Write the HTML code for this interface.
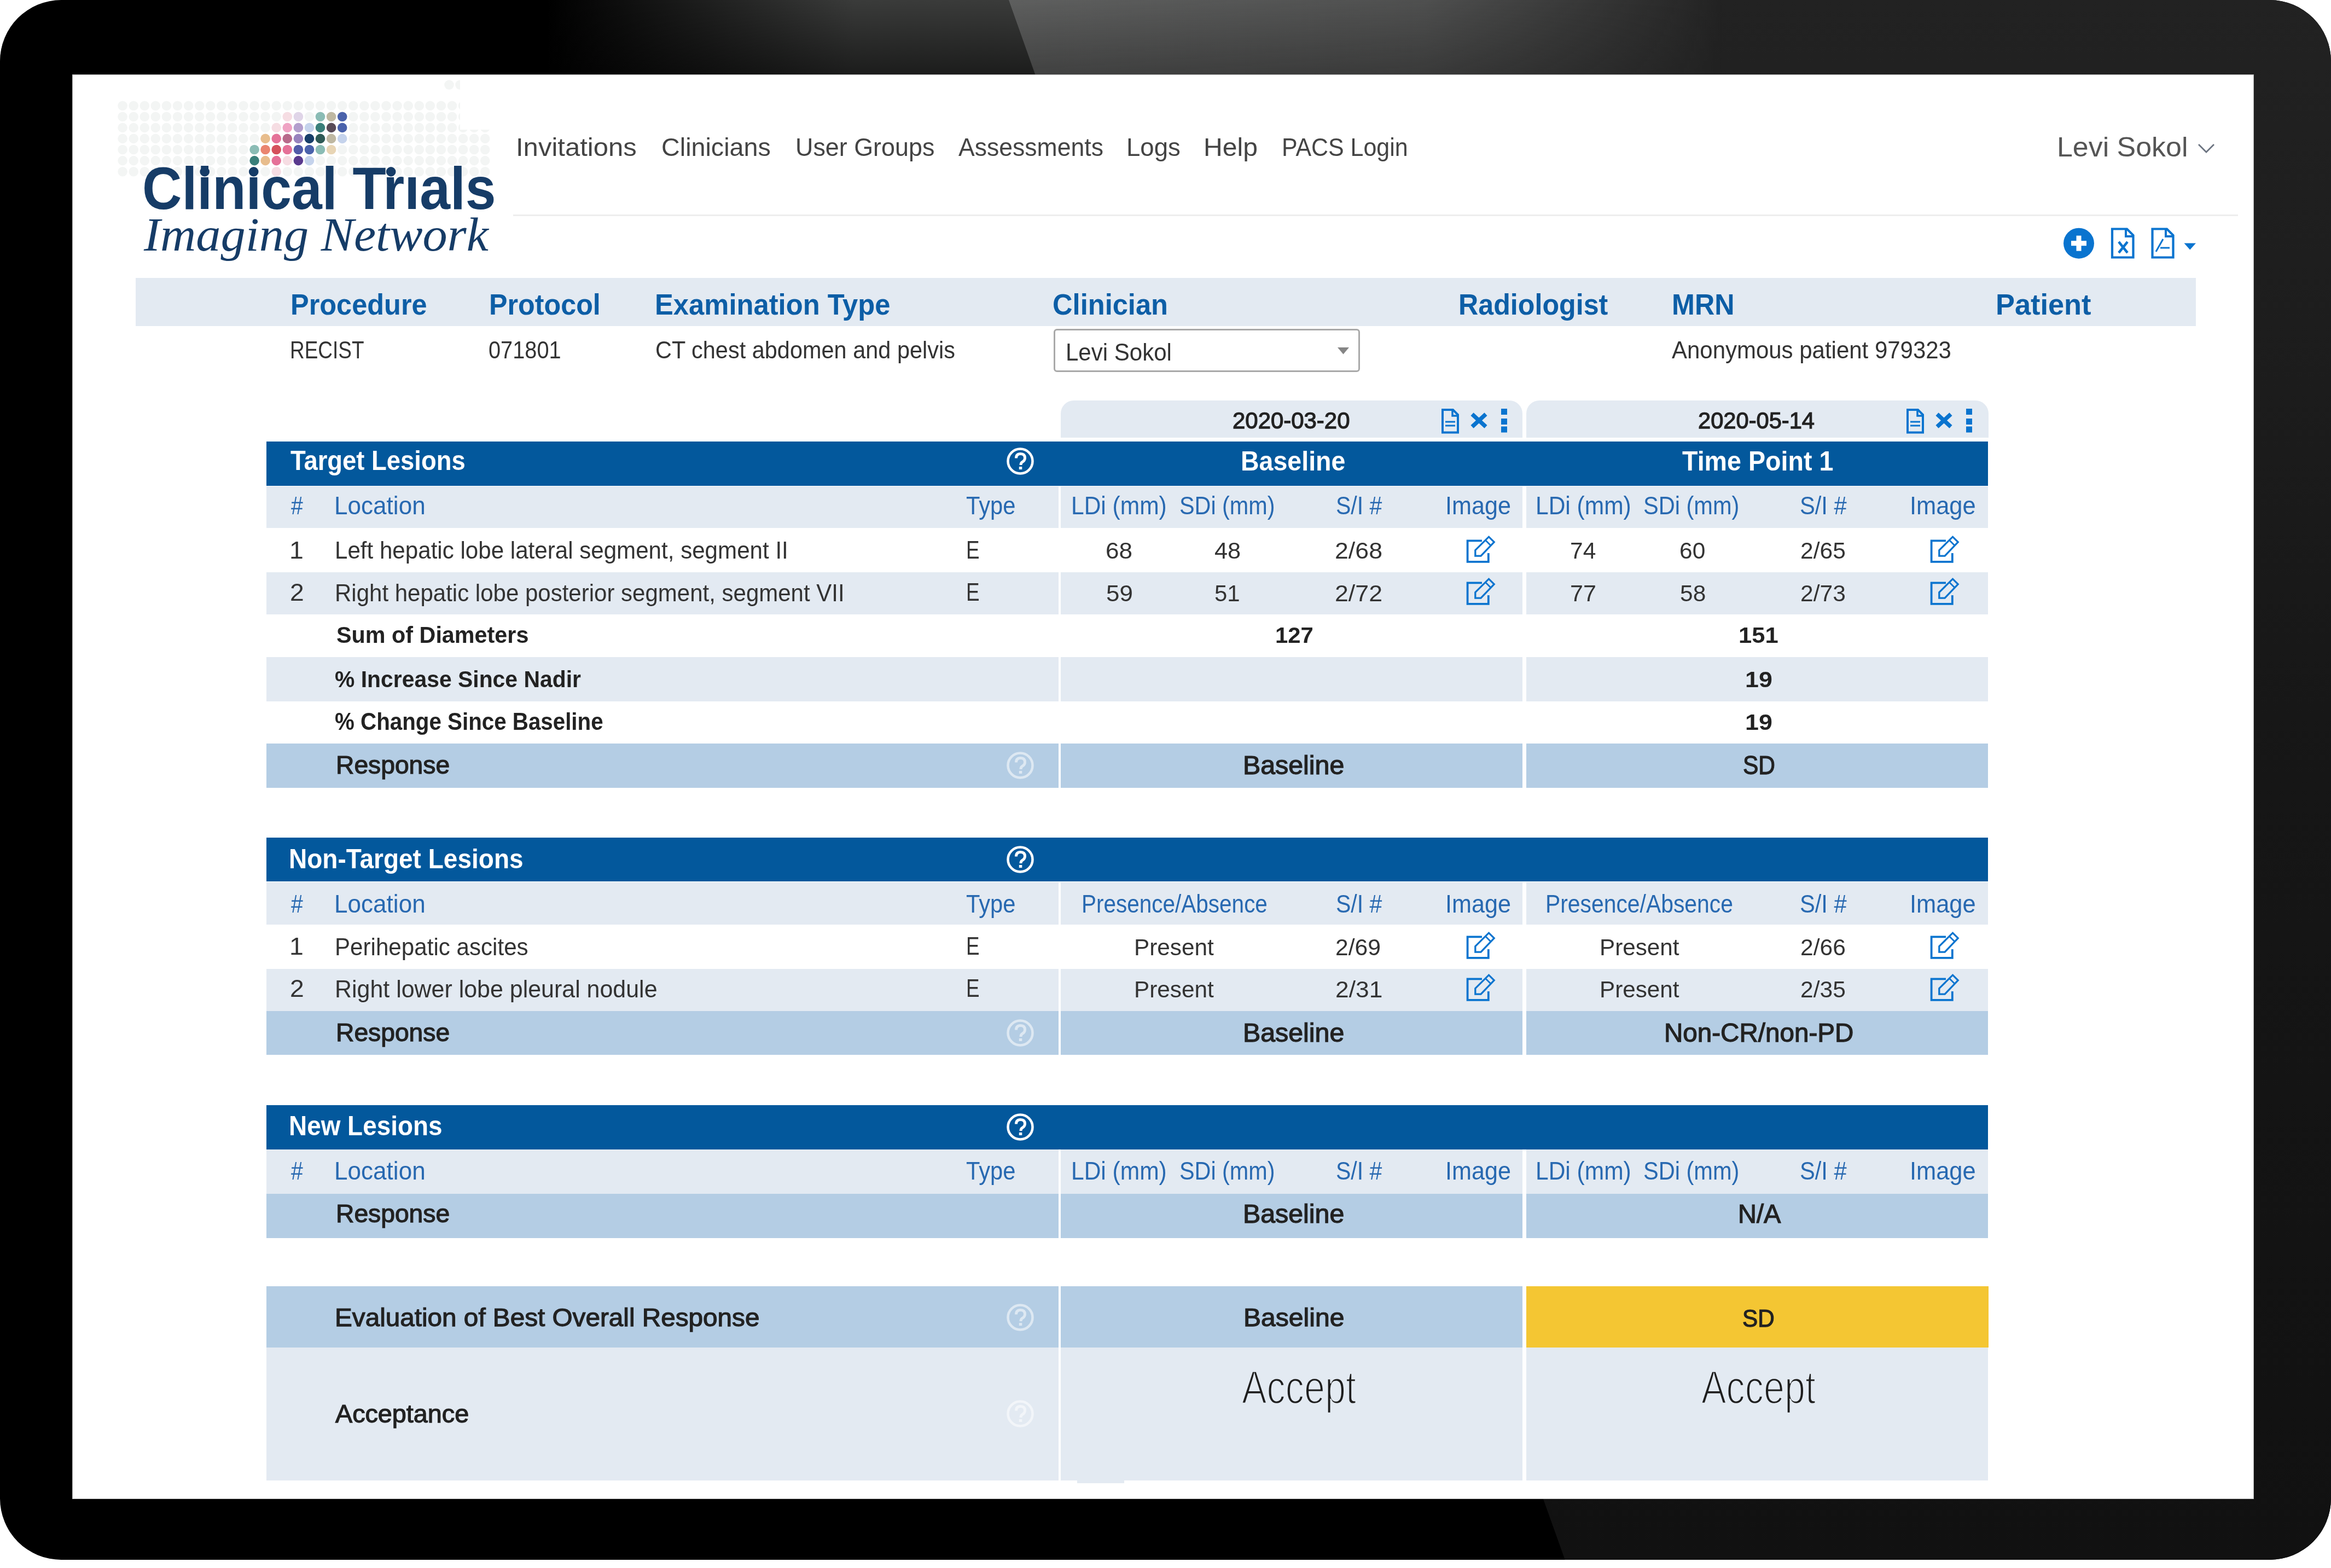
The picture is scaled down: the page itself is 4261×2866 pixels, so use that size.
<!DOCTYPE html>
<html><head><meta charset="utf-8"><title>Clinical Trials Imaging Network</title>
<style>
html,body{margin:0;padding:0;}
body{width:4261px;height:2866px;position:relative;overflow:hidden;background:#fff;font-family:'Liberation Sans', sans-serif;}
.t{position:absolute;white-space:nowrap;transform-origin:0 0;}
</style></head><body>
<svg style="position:absolute;left:0;top:0" width="4261" height="2866" viewBox="0 0 4261 2866">
<defs>
<clipPath id="fr"><path fill-rule="evenodd" d="M112 0 H4149 A112 112 0 0 1 4261 112 V2739 A112 112 0 0 1 4149 2851 H112 A112 112 0 0 1 0 2739 V112 A112 112 0 0 1 112 0 Z M132 136 V2740 H4120 V136 Z"/></clipPath>
<linearGradient id="glh" gradientUnits="userSpaceOnUse" x1="1000" y1="0" x2="1560" y2="0"><stop offset="0" stop-color="#3a3b3a" stop-opacity="0"/><stop offset="1" stop-color="#3a3b3a" stop-opacity="1"/></linearGradient>
<linearGradient id="gvl" gradientUnits="userSpaceOnUse" x1="0" y1="0" x2="0" y2="136"><stop offset="0" stop-color="#000" stop-opacity="0"/><stop offset="1" stop-color="#000" stop-opacity="0.52"/></linearGradient>
<linearGradient id="gvm" gradientUnits="userSpaceOnUse" x1="0" y1="0" x2="0" y2="136"><stop offset="0" stop-color="#fff"/><stop offset="1" stop-color="#8a8a8a"/></linearGradient>
<mask id="mr" maskUnits="userSpaceOnUse" x="0" y="0" width="4261" height="140"><rect x="0" y="0" width="4261" height="136" fill="url(#gvm)"/></mask>
<linearGradient id="gbase" gradientUnits="userSpaceOnUse" x1="0" y1="0" x2="0" y2="2851"><stop offset="0" stop-color="#222222"/><stop offset="0.5" stop-color="#161616"/><stop offset="1" stop-color="#111111"/></linearGradient>
<linearGradient id="gr" gradientUnits="userSpaceOnUse" x1="1850" y1="0" x2="3150" y2="0"><stop offset="0" stop-color="#a0a2a1" stop-opacity="0.48"/><stop offset="0.577" stop-color="#a0a2a1" stop-opacity="0.36"/><stop offset="0.96" stop-color="#a0a2a1" stop-opacity="0.04"/><stop offset="1" stop-color="#a0a2a1" stop-opacity="0"/></linearGradient>
</defs>
<g clip-path="url(#fr)">
<rect x="0" y="0" width="4261" height="2851" fill="#000"/>
<polygon points="0,0 1843.7,0 1892.2,136 0,136" fill="url(#glh)"/>
<polygon points="0,0 1843.7,0 1892.2,136 0,136" fill="url(#gvl)"/>
<polygon points="1843.7,0 4261,0 4261,2851 2860.7,2851" fill="url(#gbase)"/>
<polygon points="1843.7,0 4261,0 4261,136 1892.2,136" fill="url(#gr)" mask="url(#mr)"/>
</g>
</svg>
<div style="position:absolute;left:132px;top:136px;width:3988px;height:2604px;background:#ffffff;box-shadow:inset 0 0 0 1px rgba(0,0,0,0.28)"></div><svg style="position:absolute;left:0;top:0" width="1000" height="500" viewBox="0 0 1000 500"><circle cx="224.1" cy="193.2" r="8.8" fill="#f3f5f4"/><circle cx="244.2" cy="193.2" r="8.8" fill="#f3f5f4"/><circle cx="264.3" cy="193.2" r="8.8" fill="#f3f5f4"/><circle cx="284.3" cy="193.2" r="8.8" fill="#f3f5f4"/><circle cx="304.4" cy="193.2" r="8.8" fill="#f3f5f4"/><circle cx="324.5" cy="193.2" r="8.8" fill="#f3f5f4"/><circle cx="344.6" cy="193.2" r="8.8" fill="#f3f5f4"/><circle cx="364.7" cy="193.2" r="8.8" fill="#f3f5f4"/><circle cx="384.7" cy="193.2" r="8.8" fill="#f3f5f4"/><circle cx="404.8" cy="193.2" r="8.8" fill="#f3f5f4"/><circle cx="424.9" cy="193.2" r="8.8" fill="#f3f5f4"/><circle cx="445.0" cy="193.2" r="8.8" fill="#f3f5f4"/><circle cx="465.1" cy="193.2" r="8.8" fill="#f3f5f4"/><circle cx="485.1" cy="193.2" r="8.8" fill="#f3f5f4"/><circle cx="505.2" cy="193.2" r="8.8" fill="#f3f5f4"/><circle cx="525.3" cy="193.2" r="8.8" fill="#f3f5f4"/><circle cx="545.4" cy="193.2" r="8.8" fill="#f3f5f4"/><circle cx="565.5" cy="193.2" r="8.8" fill="#f3f5f4"/><circle cx="585.5" cy="193.2" r="8.8" fill="#f3f5f4"/><circle cx="605.6" cy="193.2" r="8.8" fill="#f3f5f4"/><circle cx="625.7" cy="193.2" r="8.8" fill="#f3f5f4"/><circle cx="645.8" cy="193.2" r="8.8" fill="#f3f5f4"/><circle cx="665.9" cy="193.2" r="8.8" fill="#f3f5f4"/><circle cx="685.9" cy="193.2" r="8.8" fill="#f3f5f4"/><circle cx="706.0" cy="193.2" r="8.8" fill="#f3f5f4"/><circle cx="726.1" cy="193.2" r="8.8" fill="#f3f5f4"/><circle cx="746.2" cy="193.2" r="8.8" fill="#f3f5f4"/><circle cx="766.3" cy="193.2" r="8.8" fill="#f3f5f4"/><circle cx="786.3" cy="193.2" r="8.8" fill="#f3f5f4"/><circle cx="806.4" cy="193.2" r="8.8" fill="#f3f5f4"/><circle cx="826.5" cy="193.2" r="8.8" fill="#f3f5f4"/><circle cx="846.6" cy="193.2" r="8.8" fill="#f3f5f4"/><circle cx="866.7" cy="193.2" r="8.8" fill="#f3f5f4"/><circle cx="886.7" cy="193.2" r="8.8" fill="#f3f5f4"/><circle cx="224.1" cy="213.3" r="8.8" fill="#f3f5f4"/><circle cx="244.2" cy="213.3" r="8.8" fill="#f3f5f4"/><circle cx="264.3" cy="213.3" r="8.8" fill="#f3f5f4"/><circle cx="284.3" cy="213.3" r="8.8" fill="#f3f5f4"/><circle cx="304.4" cy="213.3" r="8.8" fill="#f3f5f4"/><circle cx="324.5" cy="213.3" r="8.8" fill="#f3f5f4"/><circle cx="344.6" cy="213.3" r="8.8" fill="#f3f5f4"/><circle cx="364.7" cy="213.3" r="8.8" fill="#f3f5f4"/><circle cx="384.7" cy="213.3" r="8.8" fill="#f3f5f4"/><circle cx="404.8" cy="213.3" r="8.8" fill="#f3f5f4"/><circle cx="424.9" cy="213.3" r="8.8" fill="#f3f5f4"/><circle cx="445.0" cy="213.3" r="8.8" fill="#f3f5f4"/><circle cx="465.1" cy="213.3" r="8.8" fill="#f3f5f4"/><circle cx="485.1" cy="213.3" r="8.8" fill="#f3f5f4"/><circle cx="505.2" cy="213.3" r="8.8" fill="#f3f5f4"/><circle cx="525.3" cy="213.3" r="8.8" fill="#f6dde3"/><circle cx="545.4" cy="213.3" r="8.8" fill="#e0d5e8"/><circle cx="565.5" cy="213.3" r="8.8" fill="#f3f5f4"/><circle cx="585.5" cy="213.3" r="8.8" fill="#8bbcb5"/><circle cx="605.6" cy="213.3" r="8.8" fill="#bfb8a2"/><circle cx="625.7" cy="213.3" r="8.8" fill="#4a62ab"/><circle cx="645.8" cy="213.3" r="8.8" fill="#f3f5f4"/><circle cx="665.9" cy="213.3" r="8.8" fill="#f3f5f4"/><circle cx="685.9" cy="213.3" r="8.8" fill="#f3f5f4"/><circle cx="706.0" cy="213.3" r="8.8" fill="#f3f5f4"/><circle cx="726.1" cy="213.3" r="8.8" fill="#f3f5f4"/><circle cx="746.2" cy="213.3" r="8.8" fill="#f3f5f4"/><circle cx="766.3" cy="213.3" r="8.8" fill="#f3f5f4"/><circle cx="786.3" cy="213.3" r="8.8" fill="#f3f5f4"/><circle cx="806.4" cy="213.3" r="8.8" fill="#f3f5f4"/><circle cx="826.5" cy="213.3" r="8.8" fill="#f3f5f4"/><circle cx="846.6" cy="213.3" r="8.8" fill="#f3f5f4"/><circle cx="866.7" cy="213.3" r="8.8" fill="#f3f5f4"/><circle cx="886.7" cy="213.3" r="8.8" fill="#f3f5f4"/><circle cx="224.1" cy="233.4" r="8.8" fill="#f3f5f4"/><circle cx="244.2" cy="233.4" r="8.8" fill="#f3f5f4"/><circle cx="264.3" cy="233.4" r="8.8" fill="#f3f5f4"/><circle cx="284.3" cy="233.4" r="8.8" fill="#f3f5f4"/><circle cx="304.4" cy="233.4" r="8.8" fill="#f3f5f4"/><circle cx="324.5" cy="233.4" r="8.8" fill="#f3f5f4"/><circle cx="344.6" cy="233.4" r="8.8" fill="#f3f5f4"/><circle cx="364.7" cy="233.4" r="8.8" fill="#f3f5f4"/><circle cx="384.7" cy="233.4" r="8.8" fill="#f3f5f4"/><circle cx="404.8" cy="233.4" r="8.8" fill="#f3f5f4"/><circle cx="424.9" cy="233.4" r="8.8" fill="#f3f5f4"/><circle cx="445.0" cy="233.4" r="8.8" fill="#f3f5f4"/><circle cx="465.1" cy="233.4" r="8.8" fill="#f3f5f4"/><circle cx="485.1" cy="233.4" r="8.8" fill="#f3f5f4"/><circle cx="505.2" cy="233.4" r="8.8" fill="#f6dde3"/><circle cx="525.3" cy="233.4" r="8.8" fill="#efa3c3"/><circle cx="545.4" cy="233.4" r="8.8" fill="#b39fcd"/><circle cx="565.5" cy="233.4" r="8.8" fill="#c5d3ec"/><circle cx="585.5" cy="233.4" r="8.8" fill="#3a7f7a"/><circle cx="605.6" cy="233.4" r="8.8" fill="#594b57"/><circle cx="625.7" cy="233.4" r="8.8" fill="#4a62ab"/><circle cx="645.8" cy="233.4" r="8.8" fill="#f3f5f4"/><circle cx="665.9" cy="233.4" r="8.8" fill="#f3f5f4"/><circle cx="685.9" cy="233.4" r="8.8" fill="#f3f5f4"/><circle cx="706.0" cy="233.4" r="8.8" fill="#f3f5f4"/><circle cx="726.1" cy="233.4" r="8.8" fill="#f3f5f4"/><circle cx="746.2" cy="233.4" r="8.8" fill="#f3f5f4"/><circle cx="766.3" cy="233.4" r="8.8" fill="#f3f5f4"/><circle cx="786.3" cy="233.4" r="8.8" fill="#f3f5f4"/><circle cx="806.4" cy="233.4" r="8.8" fill="#f3f5f4"/><circle cx="826.5" cy="233.4" r="8.8" fill="#f3f5f4"/><circle cx="846.6" cy="233.4" r="8.8" fill="#f3f5f4"/><circle cx="866.7" cy="233.4" r="8.8" fill="#f3f5f4"/><circle cx="886.7" cy="233.4" r="8.8" fill="#f3f5f4"/><circle cx="224.1" cy="253.4" r="8.8" fill="#f3f5f4"/><circle cx="244.2" cy="253.4" r="8.8" fill="#f3f5f4"/><circle cx="264.3" cy="253.4" r="8.8" fill="#f3f5f4"/><circle cx="284.3" cy="253.4" r="8.8" fill="#f3f5f4"/><circle cx="304.4" cy="253.4" r="8.8" fill="#f3f5f4"/><circle cx="324.5" cy="253.4" r="8.8" fill="#f3f5f4"/><circle cx="344.6" cy="253.4" r="8.8" fill="#f3f5f4"/><circle cx="364.7" cy="253.4" r="8.8" fill="#f3f5f4"/><circle cx="384.7" cy="253.4" r="8.8" fill="#f3f5f4"/><circle cx="404.8" cy="253.4" r="8.8" fill="#f3f5f4"/><circle cx="424.9" cy="253.4" r="8.8" fill="#f3f5f4"/><circle cx="445.0" cy="253.4" r="8.8" fill="#f3f5f4"/><circle cx="465.1" cy="253.4" r="8.8" fill="#f3f5f4"/><circle cx="485.1" cy="253.4" r="8.8" fill="#e8bd8d"/><circle cx="505.2" cy="253.4" r="8.8" fill="#e57198"/><circle cx="525.3" cy="253.4" r="8.8" fill="#b86a8b"/><circle cx="545.4" cy="253.4" r="8.8" fill="#9782bd"/><circle cx="565.5" cy="253.4" r="8.8" fill="#173e69"/><circle cx="585.5" cy="253.4" r="8.8" fill="#2e5a56"/><circle cx="605.6" cy="253.4" r="8.8" fill="#bfb8a2"/><circle cx="625.7" cy="253.4" r="8.8" fill="#c5d3ec"/><circle cx="645.8" cy="253.4" r="8.8" fill="#f3f5f4"/><circle cx="665.9" cy="253.4" r="8.8" fill="#f3f5f4"/><circle cx="685.9" cy="253.4" r="8.8" fill="#f3f5f4"/><circle cx="706.0" cy="253.4" r="8.8" fill="#f3f5f4"/><circle cx="726.1" cy="253.4" r="8.8" fill="#f3f5f4"/><circle cx="746.2" cy="253.4" r="8.8" fill="#f3f5f4"/><circle cx="766.3" cy="253.4" r="8.8" fill="#f3f5f4"/><circle cx="786.3" cy="253.4" r="8.8" fill="#f3f5f4"/><circle cx="806.4" cy="253.4" r="8.8" fill="#f3f5f4"/><circle cx="826.5" cy="253.4" r="8.8" fill="#f3f5f4"/><circle cx="846.6" cy="253.4" r="8.8" fill="#f3f5f4"/><circle cx="866.7" cy="253.4" r="8.8" fill="#f3f5f4"/><circle cx="886.7" cy="253.4" r="8.8" fill="#f3f5f4"/><circle cx="224.1" cy="273.5" r="8.8" fill="#f3f5f4"/><circle cx="244.2" cy="273.5" r="8.8" fill="#f3f5f4"/><circle cx="264.3" cy="273.5" r="8.8" fill="#f3f5f4"/><circle cx="284.3" cy="273.5" r="8.8" fill="#f3f5f4"/><circle cx="304.4" cy="273.5" r="8.8" fill="#f3f5f4"/><circle cx="324.5" cy="273.5" r="8.8" fill="#f3f5f4"/><circle cx="344.6" cy="273.5" r="8.8" fill="#f3f5f4"/><circle cx="364.7" cy="273.5" r="8.8" fill="#f3f5f4"/><circle cx="384.7" cy="273.5" r="8.8" fill="#f3f5f4"/><circle cx="404.8" cy="273.5" r="8.8" fill="#f3f5f4"/><circle cx="424.9" cy="273.5" r="8.8" fill="#f3f5f4"/><circle cx="445.0" cy="273.5" r="8.8" fill="#f3f5f4"/><circle cx="465.1" cy="273.5" r="8.8" fill="#8bbcb5"/><circle cx="485.1" cy="273.5" r="8.8" fill="#ea8570"/><circle cx="505.2" cy="273.5" r="8.8" fill="#d5505c"/><circle cx="525.3" cy="273.5" r="8.8" fill="#e57198"/><circle cx="545.4" cy="273.5" r="8.8" fill="#525ba9"/><circle cx="565.5" cy="273.5" r="8.8" fill="#4a62ab"/><circle cx="585.5" cy="273.5" r="8.8" fill="#8bbcb5"/><circle cx="605.6" cy="273.5" r="8.8" fill="#e8d5b5"/><circle cx="625.7" cy="273.5" r="8.8" fill="#f3f5f4"/><circle cx="645.8" cy="273.5" r="8.8" fill="#f3f5f4"/><circle cx="665.9" cy="273.5" r="8.8" fill="#f3f5f4"/><circle cx="685.9" cy="273.5" r="8.8" fill="#f3f5f4"/><circle cx="706.0" cy="273.5" r="8.8" fill="#f3f5f4"/><circle cx="726.1" cy="273.5" r="8.8" fill="#f3f5f4"/><circle cx="746.2" cy="273.5" r="8.8" fill="#f3f5f4"/><circle cx="766.3" cy="273.5" r="8.8" fill="#f3f5f4"/><circle cx="786.3" cy="273.5" r="8.8" fill="#f3f5f4"/><circle cx="806.4" cy="273.5" r="8.8" fill="#f3f5f4"/><circle cx="826.5" cy="273.5" r="8.8" fill="#f3f5f4"/><circle cx="846.6" cy="273.5" r="8.8" fill="#f3f5f4"/><circle cx="866.7" cy="273.5" r="8.8" fill="#f3f5f4"/><circle cx="886.7" cy="273.5" r="8.8" fill="#f3f5f4"/><circle cx="224.1" cy="293.6" r="8.8" fill="#f3f5f4"/><circle cx="244.2" cy="293.6" r="8.8" fill="#f3f5f4"/><circle cx="264.3" cy="293.6" r="8.8" fill="#f3f5f4"/><circle cx="284.3" cy="293.6" r="8.8" fill="#f3f5f4"/><circle cx="304.4" cy="293.6" r="8.8" fill="#f3f5f4"/><circle cx="324.5" cy="293.6" r="8.8" fill="#f3f5f4"/><circle cx="344.6" cy="293.6" r="8.8" fill="#f3f5f4"/><circle cx="364.7" cy="293.6" r="8.8" fill="#f3f5f4"/><circle cx="384.7" cy="293.6" r="8.8" fill="#f3f5f4"/><circle cx="404.8" cy="293.6" r="8.8" fill="#f3f5f4"/><circle cx="424.9" cy="293.6" r="8.8" fill="#f3f5f4"/><circle cx="445.0" cy="293.6" r="8.8" fill="#f3f5f4"/><circle cx="465.1" cy="293.6" r="8.8" fill="#3a7f7a"/><circle cx="485.1" cy="293.6" r="8.8" fill="#e8bd8d"/><circle cx="505.2" cy="293.6" r="8.8" fill="#e57198"/><circle cx="525.3" cy="293.6" r="8.8" fill="#f6dde3"/><circle cx="545.4" cy="293.6" r="8.8" fill="#5a3a8e"/><circle cx="565.5" cy="293.6" r="8.8" fill="#c5d3ec"/><circle cx="585.5" cy="293.6" r="8.8" fill="#f3f5f4"/><circle cx="605.6" cy="293.6" r="8.8" fill="#f3f5f4"/><circle cx="625.7" cy="293.6" r="8.8" fill="#f3f5f4"/><circle cx="645.8" cy="293.6" r="8.8" fill="#f3f5f4"/><circle cx="665.9" cy="293.6" r="8.8" fill="#f3f5f4"/><circle cx="685.9" cy="293.6" r="8.8" fill="#f3f5f4"/><circle cx="706.0" cy="293.6" r="8.8" fill="#f3f5f4"/><circle cx="726.1" cy="293.6" r="8.8" fill="#f3f5f4"/><circle cx="746.2" cy="293.6" r="8.8" fill="#f3f5f4"/><circle cx="766.3" cy="293.6" r="8.8" fill="#f3f5f4"/><circle cx="786.3" cy="293.6" r="8.8" fill="#f3f5f4"/><circle cx="806.4" cy="293.6" r="8.8" fill="#f3f5f4"/><circle cx="826.5" cy="293.6" r="8.8" fill="#f3f5f4"/><circle cx="846.6" cy="293.6" r="8.8" fill="#f3f5f4"/><circle cx="866.7" cy="293.6" r="8.8" fill="#f3f5f4"/><circle cx="886.7" cy="293.6" r="8.8" fill="#f3f5f4"/><circle cx="224.1" cy="313.7" r="8.8" fill="#f3f5f4"/><circle cx="244.2" cy="313.7" r="8.8" fill="#f3f5f4"/><circle cx="264.3" cy="313.7" r="8.8" fill="#f3f5f4"/><circle cx="284.3" cy="313.7" r="8.8" fill="#f3f5f4"/><circle cx="304.4" cy="313.7" r="8.8" fill="#f3f5f4"/><circle cx="324.5" cy="313.7" r="8.8" fill="#f3f5f4"/><circle cx="344.6" cy="313.7" r="8.8" fill="#f3f5f4"/><circle cx="364.7" cy="313.7" r="8.8" fill="#f3f5f4"/><circle cx="384.7" cy="313.7" r="8.8" fill="#f3f5f4"/><circle cx="404.8" cy="313.7" r="8.8" fill="#f3f5f4"/><circle cx="424.9" cy="313.7" r="8.8" fill="#f3f5f4"/><circle cx="445.0" cy="313.7" r="8.8" fill="#f3f5f4"/><circle cx="465.1" cy="313.7" r="8.8" fill="#f3f5f4"/><circle cx="485.1" cy="313.7" r="8.8" fill="#f3f5f4"/><circle cx="505.2" cy="313.7" r="8.8" fill="#f6dde3"/><circle cx="525.3" cy="313.7" r="8.8" fill="#f3f5f4"/><circle cx="545.4" cy="313.7" r="8.8" fill="#f3f5f4"/><circle cx="565.5" cy="313.7" r="8.8" fill="#f3f5f4"/><circle cx="585.5" cy="313.7" r="8.8" fill="#f3f5f4"/><circle cx="605.6" cy="313.7" r="8.8" fill="#f3f5f4"/><circle cx="625.7" cy="313.7" r="8.8" fill="#f3f5f4"/><circle cx="645.8" cy="313.7" r="8.8" fill="#f3f5f4"/><circle cx="665.9" cy="313.7" r="8.8" fill="#f3f5f4"/><circle cx="685.9" cy="313.7" r="8.8" fill="#f3f5f4"/><circle cx="706.0" cy="313.7" r="8.8" fill="#f3f5f4"/><circle cx="726.1" cy="313.7" r="8.8" fill="#f3f5f4"/><circle cx="746.2" cy="313.7" r="8.8" fill="#f3f5f4"/><circle cx="766.3" cy="313.7" r="8.8" fill="#f3f5f4"/><circle cx="786.3" cy="313.7" r="8.8" fill="#f3f5f4"/><circle cx="806.4" cy="313.7" r="8.8" fill="#f3f5f4"/><circle cx="826.5" cy="313.7" r="8.8" fill="#f3f5f4"/><circle cx="846.6" cy="313.7" r="8.8" fill="#f3f5f4"/><circle cx="866.7" cy="313.7" r="8.8" fill="#f3f5f4"/><circle cx="886.7" cy="313.7" r="8.8" fill="#f3f5f4"/><rect x="841" y="140" width="159" height="97" fill="#fff"/><circle cx="821" cy="155" r="8.8" fill="#f3f5f4"/><circle cx="841" cy="155" r="8.8" fill="#f3f5f4"/><rect x="841" y="140" width="20" height="40" fill="#fff"/></svg><svg style="position:absolute;left:4016px;top:260px" width="34" height="22" viewBox="0 0 34 22"><polyline points="3,4 17,18 31,4" fill="none" stroke="#6b7380" stroke-width="2.8"/></svg><div style="position:absolute;left:938px;top:392px;width:3153px;height:3px;background:#eeeeee;"></div><svg style="position:absolute;left:3760px;top:410px" width="270" height="70" viewBox="3760 410 270 70">
<circle cx="3800" cy="444.7" r="28" fill="#0a74cf"/>
<rect x="3786" y="440.2" width="28" height="9" fill="#fff"/><rect x="3795.5" y="430.7" width="9" height="28" fill="#fff"/>
<path d="M3861 418.5 H3888 L3899.5 430 V470.5 H3861 Z" fill="none" stroke="#0a74cf" stroke-width="4.2" stroke-linejoin="miter"/>
<path d="M3886 418.5 V432 H3899.5" fill="none" stroke="#0a74cf" stroke-width="4"/>
<path d="M3873 442 L3889 462 M3889 442 L3873 462" stroke="#0a74cf" stroke-width="4.5"/>
<path d="M3934.5 418.5 H3961 L3972.5 430 V470.5 H3934.5 Z" fill="none" stroke="#0a74cf" stroke-width="4.2"/>
<path d="M3959 418.5 V432 H3972.5" fill="none" stroke="#0a74cf" stroke-width="4"/>
<path d="M3954 437 L3941 460 M3949 453 H3966" stroke="#0a74cf" stroke-width="3" fill="none"/>
<path d="M3992.5 444.5 H4014 L4003.2 456.5 Z" fill="#0a74cf"/>
</svg><div style="position:absolute;left:247.5px;top:508px;width:3766.5px;height:88px;background:#e3eaf2;"></div><div style="position:absolute;left:1925.5px;top:600.5px;width:560.5px;height:79.5px;box-sizing:border-box;border:3px solid #a9a9a9;border-radius:6px;background:#fff"></div><svg style="position:absolute;left:2440px;top:630px" width="32" height="24" viewBox="0 0 32 24"><path d="M5 5 H26 L15.5 17.5 Z" fill="#858585"/></svg><div style="position:absolute;left:1938.6px;top:732.4px;width:844.5999999999999px;height:67.4px;background:#e3eaf2;border-radius:24px 24px 0 0"></div><svg style="position:absolute;left:2630px;top:740px" width="130" height="60" viewBox="2630 740 130 60">
<path d="M2637 749 H2656 L2665 758 V790.6 H2637 Z" fill="none" stroke="#0a74cf" stroke-width="4"/>
<path d="M2655 749 V760 H2665" fill="none" stroke="#0a74cf" stroke-width="3.5"/>
<path d="M2642 771 H2660 M2642 778 H2660" stroke="#0a74cf" stroke-width="3"/>
<path d="M2691 757 L2716 780 M2716 757 L2691 780" stroke="#0a74cf" stroke-width="7.5"/>
<rect x="2744" y="747" width="11" height="11" fill="#0a74cf"/><rect x="2744" y="765" width="11" height="11" fill="#0a74cf"/><rect x="2744" y="779.5" width="11" height="11" fill="#0a74cf"/>
</svg><div style="position:absolute;left:2790px;top:732.4px;width:844.5px;height:67.4px;background:#e3eaf2;border-radius:24px 24px 0 0"></div><svg style="position:absolute;left:3479.5px;top:740px" width="130" height="60" viewBox="3479.5 740 130 60">
<path d="M3486.5 749 H3505.5 L3514.5 758 V790.6 H3486.5 Z" fill="none" stroke="#0a74cf" stroke-width="4"/>
<path d="M3504.5 749 V760 H3514.5" fill="none" stroke="#0a74cf" stroke-width="3.5"/>
<path d="M3491.5 771 H3509.5 M3491.5 778 H3509.5" stroke="#0a74cf" stroke-width="3"/>
<path d="M3540.5 757 L3565.5 780 M3565.5 757 L3540.5 780" stroke="#0a74cf" stroke-width="7.5"/>
<rect x="3593.5" y="747" width="11" height="11" fill="#0a74cf"/><rect x="3593.5" y="765" width="11" height="11" fill="#0a74cf"/><rect x="3593.5" y="779.5" width="11" height="11" fill="#0a74cf"/>
</svg><div style="position:absolute;left:486.7px;top:806.7px;width:3147.8px;height:81.0px;background:#03589c;"></div><div style="position:absolute;left:486.7px;top:888.5px;width:3147.8px;height:76.10000000000002px;background:#e3eaf2;"></div><div style="position:absolute;left:1935px;top:888.5px;width:4px;height:76.10000000000002px;background:#ffffff;"></div><div style="position:absolute;left:2783px;top:888.5px;width:7px;height:76.10000000000002px;background:#ffffff;"></div><div style="position:absolute;left:486.7px;top:964.6px;width:3147.8px;height:81.19999999999993px;background:#ffffff;"></div><div style="position:absolute;left:1935px;top:964.6px;width:4px;height:81.19999999999993px;background:#ffffff;"></div><div style="position:absolute;left:2783px;top:964.6px;width:7px;height:81.19999999999993px;background:#ffffff;"></div><div style="position:absolute;left:486.7px;top:1045.8px;width:3147.8px;height:77.70000000000005px;background:#e3eaf2;"></div><div style="position:absolute;left:1935px;top:1045.8px;width:4px;height:77.70000000000005px;background:#ffffff;"></div><div style="position:absolute;left:2783px;top:1045.8px;width:7px;height:77.70000000000005px;background:#ffffff;"></div><div style="position:absolute;left:486.7px;top:1123.5px;width:3147.8px;height:77.5px;background:#ffffff;"></div><div style="position:absolute;left:486.7px;top:1201px;width:3147.8px;height:80.70000000000005px;background:#e3eaf2;"></div><div style="position:absolute;left:1935px;top:1201px;width:4px;height:80.70000000000005px;background:#ffffff;"></div><div style="position:absolute;left:2783px;top:1201px;width:7px;height:80.70000000000005px;background:#ffffff;"></div><div style="position:absolute;left:486.7px;top:1281.7px;width:3147.8px;height:77.0px;background:#ffffff;"></div><div style="position:absolute;left:486.7px;top:1358.7px;width:3147.8px;height:81.29999999999995px;background:#b4cde4;"></div><div style="position:absolute;left:1935px;top:1358.7px;width:4px;height:81.29999999999995px;background:#ffffff;"></div><div style="position:absolute;left:2783px;top:1358.7px;width:7px;height:81.29999999999995px;background:#ffffff;"></div><div style="position:absolute;left:486.7px;top:1530.9px;width:3147.8px;height:80.39999999999986px;background:#03589c;"></div><div style="position:absolute;left:486.7px;top:1612px;width:3147.8px;height:77.59999999999991px;background:#e3eaf2;"></div><div style="position:absolute;left:1935px;top:1612px;width:4px;height:77.59999999999991px;background:#ffffff;"></div><div style="position:absolute;left:2783px;top:1612px;width:7px;height:77.59999999999991px;background:#ffffff;"></div><div style="position:absolute;left:486.7px;top:1689.6px;width:3147.8px;height:81.60000000000014px;background:#ffffff;"></div><div style="position:absolute;left:1935px;top:1689.6px;width:4px;height:81.60000000000014px;background:#ffffff;"></div><div style="position:absolute;left:2783px;top:1689.6px;width:7px;height:81.60000000000014px;background:#ffffff;"></div><div style="position:absolute;left:486.7px;top:1771.2px;width:3147.8px;height:76.59999999999991px;background:#e3eaf2;"></div><div style="position:absolute;left:1935px;top:1771.2px;width:4px;height:76.59999999999991px;background:#ffffff;"></div><div style="position:absolute;left:2783px;top:1771.2px;width:7px;height:76.59999999999991px;background:#ffffff;"></div><div style="position:absolute;left:486.7px;top:1847.8px;width:3147.8px;height:80.5px;background:#b4cde4;"></div><div style="position:absolute;left:1935px;top:1847.8px;width:4px;height:80.5px;background:#ffffff;"></div><div style="position:absolute;left:2783px;top:1847.8px;width:7px;height:80.5px;background:#ffffff;"></div><div style="position:absolute;left:486.7px;top:2020.2px;width:3147.8px;height:80.39999999999986px;background:#03589c;"></div><div style="position:absolute;left:486.7px;top:2101.4px;width:3147.8px;height:80.59999999999991px;background:#e3eaf2;"></div><div style="position:absolute;left:1935px;top:2101.4px;width:4px;height:80.59999999999991px;background:#ffffff;"></div><div style="position:absolute;left:2783px;top:2101.4px;width:7px;height:80.59999999999991px;background:#ffffff;"></div><div style="position:absolute;left:486.7px;top:2182px;width:3147.8px;height:80.59999999999991px;background:#b4cde4;"></div><div style="position:absolute;left:1935px;top:2182px;width:4px;height:80.59999999999991px;background:#ffffff;"></div><div style="position:absolute;left:2783px;top:2182px;width:7px;height:80.59999999999991px;background:#ffffff;"></div><div style="position:absolute;left:486.7px;top:2350.9px;width:3147.8px;height:111.79999999999973px;background:#b4cde4;"></div><div style="position:absolute;left:1935px;top:2350.9px;width:4px;height:111.79999999999973px;background:#ffffff;"></div><div style="position:absolute;left:2783px;top:2350.9px;width:7px;height:111.79999999999973px;background:#ffffff;"></div><div style="position:absolute;left:2790px;top:2350.9px;width:844.5px;height:111.79999999999973px;background:#f4c633;"></div><div style="position:absolute;left:486.7px;top:2462.7px;width:3147.8px;height:243.30000000000018px;background:#e3eaf2;"></div><div style="position:absolute;left:1935px;top:2462.7px;width:4px;height:243.30000000000018px;background:#ffffff;"></div><div style="position:absolute;left:2783px;top:2462.7px;width:7px;height:243.30000000000018px;background:#ffffff;"></div><div style="position:absolute;left:1969px;top:2705px;width:86px;height:5.800000000000182px;background:#e3eaf2;"></div>
<div class="t" style="left:260.36px;top:289.26px;font-size:110.14px;line-height:110.14px;font-weight:700;color:#163c67;transform:scaleX(0.9106);font-family:'Liberation Sans', sans-serif;">Clinıcal Trıals</div><div class="t" style="left:263.03px;top:384.56px;font-size:87.69px;line-height:87.69px;font-weight:400;color:#163c67;transform:scaleX(1.0303);font-family:'Liberation Serif', serif;font-style:italic;">Imaging Network</div><div class="t" style="left:942.92px;top:247.03px;font-size:45.80px;line-height:45.80px;font-weight:400;color:#444444;transform:scaleX(1.0705);font-family:'Liberation Sans', sans-serif;">Invitations</div><div class="t" style="left:1208.66px;top:247.03px;font-size:45.80px;line-height:45.80px;font-weight:400;color:#444444;transform:scaleX(1.0203);font-family:'Liberation Sans', sans-serif;">Clinicians</div><div class="t" style="left:1453.86px;top:247.03px;font-size:45.80px;line-height:45.80px;font-weight:400;color:#444444;transform:scaleX(0.9797);font-family:'Liberation Sans', sans-serif;">User Groups</div><div class="t" style="left:1751.70px;top:247.03px;font-size:45.80px;line-height:45.80px;font-weight:400;color:#444444;transform:scaleX(0.9730);font-family:'Liberation Sans', sans-serif;">Assessments</div><div class="t" style="left:2059.22px;top:247.03px;font-size:45.80px;line-height:45.80px;font-weight:400;color:#444444;transform:scaleX(0.9947);font-family:'Liberation Sans', sans-serif;">Logs</div><div class="t" style="left:2200.35px;top:247.03px;font-size:45.80px;line-height:45.80px;font-weight:400;color:#444444;transform:scaleX(1.0500);font-family:'Liberation Sans', sans-serif;">Help</div><div class="t" style="left:2343.49px;top:247.03px;font-size:45.80px;line-height:45.80px;font-weight:400;color:#444444;transform:scaleX(0.9372);font-family:'Liberation Sans', sans-serif;">PACS Login</div><div class="t" style="left:3759.88px;top:243.91px;font-size:50.43px;line-height:50.43px;font-weight:400;color:#555555;transform:scaleX(1.0291);font-family:'Liberation Sans', sans-serif;">Levi Sokol</div><div class="t" style="left:530.70px;top:529.04px;font-size:54.06px;line-height:54.06px;font-weight:700;color:#0d5ea6;transform:scaleX(0.9336);font-family:'Liberation Sans', sans-serif;">Procedure</div><div class="t" style="left:893.61px;top:529.04px;font-size:54.06px;line-height:54.06px;font-weight:700;color:#0d5ea6;transform:scaleX(0.9297);font-family:'Liberation Sans', sans-serif;">Protocol</div><div class="t" style="left:1197.18px;top:529.04px;font-size:54.06px;line-height:54.06px;font-weight:700;color:#0d5ea6;transform:scaleX(0.9387);font-family:'Liberation Sans', sans-serif;">Examination Type</div><div class="t" style="left:1923.63px;top:529.04px;font-size:54.06px;line-height:54.06px;font-weight:700;color:#0d5ea6;transform:scaleX(0.9368);font-family:'Liberation Sans', sans-serif;">Clinician</div><div class="t" style="left:2665.71px;top:529.04px;font-size:54.06px;line-height:54.06px;font-weight:700;color:#0d5ea6;transform:scaleX(0.9288);font-family:'Liberation Sans', sans-serif;">Radiologist</div><div class="t" style="left:3055.61px;top:529.04px;font-size:54.06px;line-height:54.06px;font-weight:700;color:#0d5ea6;transform:scaleX(0.9304);font-family:'Liberation Sans', sans-serif;">MRN</div><div class="t" style="left:3648.09px;top:529.04px;font-size:54.06px;line-height:54.06px;font-weight:700;color:#0d5ea6;transform:scaleX(0.9684);font-family:'Liberation Sans', sans-serif;">Patient</div><div class="t" style="left:529.53px;top:617.77px;font-size:44.93px;line-height:44.93px;font-weight:400;color:#333333;transform:scaleX(0.8228);font-family:'Liberation Sans', sans-serif;">RECIST</div><div class="t" style="left:892.92px;top:617.77px;font-size:44.93px;line-height:44.93px;font-weight:400;color:#333333;transform:scaleX(0.8849);font-family:'Liberation Sans', sans-serif;">071801</div><div class="t" style="left:1198.15px;top:617.77px;font-size:44.93px;line-height:44.93px;font-weight:400;color:#333333;transform:scaleX(0.9233);font-family:'Liberation Sans', sans-serif;">CT chest abdomen and pelvis</div><div class="t" style="left:3056.40px;top:617.77px;font-size:44.93px;line-height:44.93px;font-weight:400;color:#333333;transform:scaleX(0.9341);font-family:'Liberation Sans', sans-serif;">Anonymous patient 979323</div><div class="t" style="left:1948.15px;top:621.88px;font-size:44.20px;line-height:44.20px;font-weight:400;color:#333333;transform:scaleX(0.9508);font-family:'Liberation Sans', sans-serif;">Levi Sokol</div><div class="t" style="left:2253.03px;top:746.73px;font-size:42.61px;line-height:42.61px;font-weight:400;color:#222222;transform:scaleX(0.9839);font-family:'Liberation Sans', sans-serif;-webkit-text-stroke:1.25px #222222;">2020-03-20</div><div class="t" style="left:3103.65px;top:746.73px;font-size:42.61px;line-height:42.61px;font-weight:400;color:#222222;transform:scaleX(0.9774);font-family:'Liberation Sans', sans-serif;-webkit-text-stroke:1.25px #222222;">2020-05-14</div><div class="t" style="left:531.00px;top:817.08px;font-size:50.58px;line-height:50.58px;font-weight:700;color:#ffffff;transform:scaleX(0.8981);font-family:'Liberation Sans', sans-serif;">Target Lesions</div><div class="t" style="left:2267.87px;top:818.19px;font-size:49.28px;line-height:49.28px;font-weight:700;color:#ffffff;transform:scaleX(0.9443);font-family:'Liberation Sans', sans-serif;">Baseline</div><div class="t" style="left:3074.70px;top:818.19px;font-size:49.28px;line-height:49.28px;font-weight:700;color:#ffffff;transform:scaleX(0.9465);font-family:'Liberation Sans', sans-serif;">Time Point 1</div><div class="t" style="left:531.70px;top:902.26px;font-size:45.65px;line-height:45.65px;font-weight:400;color:#2869b1;transform:scaleX(0.8577);font-family:'Liberation Sans', sans-serif;">#</div><div class="t" style="left:610.80px;top:902.26px;font-size:45.65px;line-height:45.65px;font-weight:400;color:#2869b1;transform:scaleX(0.9661);font-family:'Liberation Sans', sans-serif;">Location</div><div class="t" style="left:1765.69px;top:902.26px;font-size:45.65px;line-height:45.65px;font-weight:400;color:#2869b1;transform:scaleX(0.9134);font-family:'Liberation Sans', sans-serif;">Type</div><div class="t" style="left:1957.61px;top:902.26px;font-size:45.65px;line-height:45.65px;font-weight:400;color:#2869b1;transform:scaleX(0.9315);font-family:'Liberation Sans', sans-serif;">LDi (mm)</div><div class="t" style="left:2156.39px;top:902.26px;font-size:45.65px;line-height:45.65px;font-weight:400;color:#2869b1;transform:scaleX(0.9058);font-family:'Liberation Sans', sans-serif;">SDi (mm)</div><div class="t" style="left:2441.80px;top:902.26px;font-size:45.65px;line-height:45.65px;font-weight:400;color:#2869b1;transform:scaleX(0.8985);font-family:'Liberation Sans', sans-serif;">S/I #</div><div class="t" style="left:2642.22px;top:902.26px;font-size:45.65px;line-height:45.65px;font-weight:400;color:#2869b1;transform:scaleX(0.9451);font-family:'Liberation Sans', sans-serif;">Image</div><div class="t" style="left:2807.01px;top:902.26px;font-size:45.65px;line-height:45.65px;font-weight:400;color:#2869b1;transform:scaleX(0.9315);font-family:'Liberation Sans', sans-serif;">LDi (mm)</div><div class="t" style="left:3004.18px;top:902.26px;font-size:45.65px;line-height:45.65px;font-weight:400;color:#2869b1;transform:scaleX(0.9105);font-family:'Liberation Sans', sans-serif;">SDi (mm)</div><div class="t" style="left:3289.77px;top:902.26px;font-size:45.65px;line-height:45.65px;font-weight:400;color:#2869b1;transform:scaleX(0.9126);font-family:'Liberation Sans', sans-serif;">S/I #</div><div class="t" style="left:3490.90px;top:902.26px;font-size:45.65px;line-height:45.65px;font-weight:400;color:#2869b1;transform:scaleX(0.9509);font-family:'Liberation Sans', sans-serif;">Image</div><div class="t" style="left:528.85px;top:984.18px;font-size:44.20px;line-height:44.20px;font-weight:400;color:#333333;transform:scaleX(1.0500);font-family:'Liberation Sans', sans-serif;">1</div><div class="t" style="left:612.21px;top:983.32px;font-size:45.22px;line-height:45.22px;font-weight:400;color:#333333;transform:scaleX(0.9314);font-family:'Liberation Sans', sans-serif;">Left hepatic lobe lateral segment, segment II</div><div class="t" style="left:1765.58px;top:982.96px;font-size:45.65px;line-height:45.65px;font-weight:400;color:#333333;transform:scaleX(0.8077);font-family:'Liberation Sans', sans-serif;">E</div><div class="t" style="left:2020.93px;top:985.41px;font-size:42.75px;line-height:42.75px;font-weight:400;color:#333333;transform:scaleX(1.0325);font-family:'Liberation Sans', sans-serif;">68</div><div class="t" style="left:2219.90px;top:985.41px;font-size:42.75px;line-height:42.75px;font-weight:400;color:#333333;transform:scaleX(1.0136);font-family:'Liberation Sans', sans-serif;">48</div><div class="t" style="left:2440.31px;top:985.41px;font-size:42.75px;line-height:42.75px;font-weight:400;color:#333333;transform:scaleX(1.0462);font-family:'Liberation Sans', sans-serif;">2/68</div><div class="t" style="left:2870.41px;top:985.41px;font-size:42.75px;line-height:42.75px;font-weight:400;color:#333333;transform:scaleX(0.9938);font-family:'Liberation Sans', sans-serif;">74</div><div class="t" style="left:3069.81px;top:985.41px;font-size:42.75px;line-height:42.75px;font-weight:400;color:#333333;transform:scaleX(0.9938);font-family:'Liberation Sans', sans-serif;">60</div><div class="t" style="left:3290.91px;top:985.41px;font-size:42.75px;line-height:42.75px;font-weight:400;color:#333333;transform:scaleX(0.9971);font-family:'Liberation Sans', sans-serif;">2/65</div><div class="t" style="left:529.90px;top:1061.38px;font-size:44.20px;line-height:44.20px;font-weight:400;color:#333333;transform:scaleX(1.0476);font-family:'Liberation Sans', sans-serif;">2</div><div class="t" style="left:612.21px;top:1060.52px;font-size:45.22px;line-height:45.22px;font-weight:400;color:#333333;transform:scaleX(0.9290);font-family:'Liberation Sans', sans-serif;">Right hepatic lobe posterior segment, segment VII</div><div class="t" style="left:1765.58px;top:1060.16px;font-size:45.65px;line-height:45.65px;font-weight:400;color:#333333;transform:scaleX(0.8077);font-family:'Liberation Sans', sans-serif;">E</div><div class="t" style="left:2021.97px;top:1062.61px;font-size:42.75px;line-height:42.75px;font-weight:400;color:#333333;transform:scaleX(1.0273);font-family:'Liberation Sans', sans-serif;">59</div><div class="t" style="left:2220.02px;top:1062.61px;font-size:42.75px;line-height:42.75px;font-weight:400;color:#333333;transform:scaleX(0.9827);font-family:'Liberation Sans', sans-serif;">51</div><div class="t" style="left:2440.31px;top:1062.61px;font-size:42.75px;line-height:42.75px;font-weight:400;color:#333333;transform:scaleX(1.0462);font-family:'Liberation Sans', sans-serif;">2/72</div><div class="t" style="left:2870.39px;top:1062.61px;font-size:42.75px;line-height:42.75px;font-weight:400;color:#333333;transform:scaleX(1.0074);font-family:'Liberation Sans', sans-serif;">77</div><div class="t" style="left:3070.81px;top:1062.61px;font-size:42.75px;line-height:42.75px;font-weight:400;color:#333333;transform:scaleX(0.9938);font-family:'Liberation Sans', sans-serif;">58</div><div class="t" style="left:3291.01px;top:1062.61px;font-size:42.75px;line-height:42.75px;font-weight:400;color:#333333;transform:scaleX(0.9959);font-family:'Liberation Sans', sans-serif;">2/73</div><div class="t" style="left:614.72px;top:1140.02px;font-size:42.03px;line-height:42.03px;font-weight:700;color:#222222;transform:scaleX(0.9837);font-family:'Liberation Sans', sans-serif;">Sum of Diameters</div><div class="t" style="left:2331.06px;top:1141.18px;font-size:41.01px;line-height:41.01px;font-weight:700;color:#222222;transform:scaleX(1.0201);font-family:'Liberation Sans', sans-serif;">127</div><div class="t" style="left:3177.98px;top:1141.18px;font-size:41.01px;line-height:41.01px;font-weight:700;color:#222222;transform:scaleX(1.0624);font-family:'Liberation Sans', sans-serif;">151</div><div class="t" style="left:612.44px;top:1220.41px;font-size:42.75px;line-height:42.75px;font-weight:700;color:#222222;transform:scaleX(0.9564);font-family:'Liberation Sans', sans-serif;">% Increase Since Nadir</div><div class="t" style="left:3190.01px;top:1221.88px;font-size:41.01px;line-height:41.01px;font-weight:700;color:#222222;transform:scaleX(1.0934);font-family:'Liberation Sans', sans-serif;">19</div><div class="t" style="left:612.47px;top:1297.80px;font-size:43.48px;line-height:43.48px;font-weight:700;color:#222222;transform:scaleX(0.9273);font-family:'Liberation Sans', sans-serif;">% Change Since Baseline</div><div class="t" style="left:3190.01px;top:1299.88px;font-size:41.01px;line-height:41.01px;font-weight:700;color:#222222;transform:scaleX(1.0934);font-family:'Liberation Sans', sans-serif;">19</div><div class="t" style="left:613.85px;top:1375.05px;font-size:46.96px;line-height:46.96px;font-weight:400;color:#222222;transform:scaleX(0.9845);font-family:'Liberation Sans', sans-serif;-webkit-text-stroke:1.25px #222222;">Response</div><div class="t" style="left:2272.43px;top:1374.81px;font-size:47.25px;line-height:47.25px;font-weight:400;color:#222222;transform:scaleX(1.0222);font-family:'Liberation Sans', sans-serif;-webkit-text-stroke:1.25px #222222;">Baseline</div><div class="t" style="left:3185.50px;top:1374.81px;font-size:47.25px;line-height:47.25px;font-weight:400;color:#222222;transform:scaleX(0.8990);font-family:'Liberation Sans', sans-serif;-webkit-text-stroke:1.25px #222222;">SD</div><div class="t" style="left:528.27px;top:1545.28px;font-size:50.58px;line-height:50.58px;font-weight:700;color:#ffffff;transform:scaleX(0.9096);font-family:'Liberation Sans', sans-serif;">Non-Target Lesions</div><div class="t" style="left:531.70px;top:1630.16px;font-size:45.65px;line-height:45.65px;font-weight:400;color:#2869b1;transform:scaleX(0.8577);font-family:'Liberation Sans', sans-serif;">#</div><div class="t" style="left:610.80px;top:1630.16px;font-size:45.65px;line-height:45.65px;font-weight:400;color:#2869b1;transform:scaleX(0.9661);font-family:'Liberation Sans', sans-serif;">Location</div><div class="t" style="left:1765.69px;top:1630.16px;font-size:45.65px;line-height:45.65px;font-weight:400;color:#2869b1;transform:scaleX(0.9134);font-family:'Liberation Sans', sans-serif;">Type</div><div class="t" style="left:1976.64px;top:1630.16px;font-size:45.65px;line-height:45.65px;font-weight:400;color:#2869b1;transform:scaleX(0.8872);font-family:'Liberation Sans', sans-serif;">Presence/Absence</div><div class="t" style="left:2441.80px;top:1630.16px;font-size:45.65px;line-height:45.65px;font-weight:400;color:#2869b1;transform:scaleX(0.8985);font-family:'Liberation Sans', sans-serif;">S/I #</div><div class="t" style="left:2642.22px;top:1630.16px;font-size:45.65px;line-height:45.65px;font-weight:400;color:#2869b1;transform:scaleX(0.9451);font-family:'Liberation Sans', sans-serif;">Image</div><div class="t" style="left:2824.51px;top:1630.16px;font-size:45.65px;line-height:45.65px;font-weight:400;color:#2869b1;transform:scaleX(0.8951);font-family:'Liberation Sans', sans-serif;">Presence/Absence</div><div class="t" style="left:3289.77px;top:1630.16px;font-size:45.65px;line-height:45.65px;font-weight:400;color:#2869b1;transform:scaleX(0.9126);font-family:'Liberation Sans', sans-serif;">S/I #</div><div class="t" style="left:3490.90px;top:1630.16px;font-size:45.65px;line-height:45.65px;font-weight:400;color:#2869b1;transform:scaleX(0.9509);font-family:'Liberation Sans', sans-serif;">Image</div><div class="t" style="left:528.85px;top:1708.38px;font-size:44.20px;line-height:44.20px;font-weight:400;color:#333333;transform:scaleX(1.0500);font-family:'Liberation Sans', sans-serif;">1</div><div class="t" style="left:612.20px;top:1707.52px;font-size:45.22px;line-height:45.22px;font-weight:400;color:#333333;transform:scaleX(0.9319);font-family:'Liberation Sans', sans-serif;">Perihepatic ascites</div><div class="t" style="left:1765.58px;top:1707.16px;font-size:45.65px;line-height:45.65px;font-weight:400;color:#333333;transform:scaleX(0.8077);font-family:'Liberation Sans', sans-serif;">E</div><div class="t" style="left:2073.03px;top:1709.61px;font-size:42.75px;line-height:42.75px;font-weight:400;color:#333333;transform:scaleX(0.9900);font-family:'Liberation Sans', sans-serif;">Present</div><div class="t" style="left:2441.00px;top:1709.61px;font-size:42.75px;line-height:42.75px;font-weight:400;color:#333333;transform:scaleX(0.9984);font-family:'Liberation Sans', sans-serif;">2/69</div><div class="t" style="left:2923.84px;top:1709.61px;font-size:42.75px;line-height:42.75px;font-weight:400;color:#333333;transform:scaleX(0.9879);font-family:'Liberation Sans', sans-serif;">Present</div><div class="t" style="left:3290.91px;top:1709.61px;font-size:42.75px;line-height:42.75px;font-weight:400;color:#333333;transform:scaleX(0.9971);font-family:'Liberation Sans', sans-serif;">2/66</div><div class="t" style="left:529.90px;top:1785.48px;font-size:44.20px;line-height:44.20px;font-weight:400;color:#333333;transform:scaleX(1.0476);font-family:'Liberation Sans', sans-serif;">2</div><div class="t" style="left:612.15px;top:1784.62px;font-size:45.22px;line-height:45.22px;font-weight:400;color:#333333;transform:scaleX(0.9495);font-family:'Liberation Sans', sans-serif;">Right lower lobe pleural nodule</div><div class="t" style="left:1765.58px;top:1784.26px;font-size:45.65px;line-height:45.65px;font-weight:400;color:#333333;transform:scaleX(0.8077);font-family:'Liberation Sans', sans-serif;">E</div><div class="t" style="left:2073.03px;top:1786.71px;font-size:42.75px;line-height:42.75px;font-weight:400;color:#333333;transform:scaleX(0.9900);font-family:'Liberation Sans', sans-serif;">Present</div><div class="t" style="left:2440.93px;top:1786.71px;font-size:42.75px;line-height:42.75px;font-weight:400;color:#333333;transform:scaleX(1.0374);font-family:'Liberation Sans', sans-serif;">2/31</div><div class="t" style="left:2923.84px;top:1786.71px;font-size:42.75px;line-height:42.75px;font-weight:400;color:#333333;transform:scaleX(0.9879);font-family:'Liberation Sans', sans-serif;">Present</div><div class="t" style="left:3290.91px;top:1786.71px;font-size:42.75px;line-height:42.75px;font-weight:400;color:#333333;transform:scaleX(0.9971);font-family:'Liberation Sans', sans-serif;">2/35</div><div class="t" style="left:613.85px;top:1863.95px;font-size:46.96px;line-height:46.96px;font-weight:400;color:#222222;transform:scaleX(0.9845);font-family:'Liberation Sans', sans-serif;-webkit-text-stroke:1.25px #222222;">Response</div><div class="t" style="left:2272.43px;top:1863.71px;font-size:47.25px;line-height:47.25px;font-weight:400;color:#222222;transform:scaleX(1.0222);font-family:'Liberation Sans', sans-serif;-webkit-text-stroke:1.25px #222222;">Baseline</div><div class="t" style="left:3041.78px;top:1863.71px;font-size:47.25px;line-height:47.25px;font-weight:400;color:#222222;transform:scaleX(1.0069);font-family:'Liberation Sans', sans-serif;-webkit-text-stroke:1.25px #222222;">Non-CR/non-PD</div><div class="t" style="left:528.28px;top:2033.08px;font-size:50.58px;line-height:50.58px;font-weight:700;color:#ffffff;transform:scaleX(0.9074);font-family:'Liberation Sans', sans-serif;">New Lesions</div><div class="t" style="left:531.70px;top:2118.06px;font-size:45.65px;line-height:45.65px;font-weight:400;color:#2869b1;transform:scaleX(0.8577);font-family:'Liberation Sans', sans-serif;">#</div><div class="t" style="left:610.80px;top:2118.06px;font-size:45.65px;line-height:45.65px;font-weight:400;color:#2869b1;transform:scaleX(0.9661);font-family:'Liberation Sans', sans-serif;">Location</div><div class="t" style="left:1765.69px;top:2118.06px;font-size:45.65px;line-height:45.65px;font-weight:400;color:#2869b1;transform:scaleX(0.9134);font-family:'Liberation Sans', sans-serif;">Type</div><div class="t" style="left:1957.61px;top:2118.06px;font-size:45.65px;line-height:45.65px;font-weight:400;color:#2869b1;transform:scaleX(0.9315);font-family:'Liberation Sans', sans-serif;">LDi (mm)</div><div class="t" style="left:2156.39px;top:2118.06px;font-size:45.65px;line-height:45.65px;font-weight:400;color:#2869b1;transform:scaleX(0.9058);font-family:'Liberation Sans', sans-serif;">SDi (mm)</div><div class="t" style="left:2441.80px;top:2118.06px;font-size:45.65px;line-height:45.65px;font-weight:400;color:#2869b1;transform:scaleX(0.8985);font-family:'Liberation Sans', sans-serif;">S/I #</div><div class="t" style="left:2642.22px;top:2118.06px;font-size:45.65px;line-height:45.65px;font-weight:400;color:#2869b1;transform:scaleX(0.9451);font-family:'Liberation Sans', sans-serif;">Image</div><div class="t" style="left:2807.01px;top:2118.06px;font-size:45.65px;line-height:45.65px;font-weight:400;color:#2869b1;transform:scaleX(0.9315);font-family:'Liberation Sans', sans-serif;">LDi (mm)</div><div class="t" style="left:3004.18px;top:2118.06px;font-size:45.65px;line-height:45.65px;font-weight:400;color:#2869b1;transform:scaleX(0.9105);font-family:'Liberation Sans', sans-serif;">SDi (mm)</div><div class="t" style="left:3289.77px;top:2118.06px;font-size:45.65px;line-height:45.65px;font-weight:400;color:#2869b1;transform:scaleX(0.9126);font-family:'Liberation Sans', sans-serif;">S/I #</div><div class="t" style="left:3490.90px;top:2118.06px;font-size:45.65px;line-height:45.65px;font-weight:400;color:#2869b1;transform:scaleX(0.9509);font-family:'Liberation Sans', sans-serif;">Image</div><div class="t" style="left:613.85px;top:2194.95px;font-size:46.96px;line-height:46.96px;font-weight:400;color:#222222;transform:scaleX(0.9845);font-family:'Liberation Sans', sans-serif;-webkit-text-stroke:1.25px #222222;">Response</div><div class="t" style="left:2272.43px;top:2194.71px;font-size:47.25px;line-height:47.25px;font-weight:400;color:#222222;transform:scaleX(1.0222);font-family:'Liberation Sans', sans-serif;-webkit-text-stroke:1.25px #222222;">Baseline</div><div class="t" style="left:3176.52px;top:2194.71px;font-size:47.25px;line-height:47.25px;font-weight:400;color:#222222;transform:scaleX(0.9941);font-family:'Liberation Sans', sans-serif;-webkit-text-stroke:1.25px #222222;">N/A</div><div class="t" style="left:611.75px;top:2385.15px;font-size:46.96px;line-height:46.96px;font-weight:400;color:#222222;transform:scaleX(1.0153);font-family:'Liberation Sans', sans-serif;-webkit-text-stroke:1.25px #222222;">Evaluation of Best Overall Response</div><div class="t" style="left:2272.93px;top:2385.05px;font-size:46.96px;line-height:46.96px;font-weight:400;color:#222222;transform:scaleX(1.0239);font-family:'Liberation Sans', sans-serif;-webkit-text-stroke:1.25px #222222;">Baseline</div><div class="t" style="left:3185.43px;top:2386.52px;font-size:45.22px;line-height:45.22px;font-weight:400;color:#222222;transform:scaleX(0.9347);font-family:'Liberation Sans', sans-serif;-webkit-text-stroke:1.25px #222222;">SD</div><div class="t" style="left:613.00px;top:2561.45px;font-size:46.96px;line-height:46.96px;font-weight:400;color:#222222;transform:scaleX(0.9949);font-family:'Liberation Sans', sans-serif;-webkit-text-stroke:1.25px #222222;">Acceptance</div><div class="t" style="left:2269.60px;top:2493.22px;font-size:85.51px;line-height:85.51px;font-weight:400;color:#1e1e1e;transform:scaleX(0.7992);font-family:'Liberation Sans', sans-serif;-webkit-text-stroke:2.6px #e3eaf2;">Accept</div><div class="t" style="left:3109.50px;top:2493.22px;font-size:85.51px;line-height:85.51px;font-weight:400;color:#1e1e1e;transform:scaleX(0.7992);font-family:'Liberation Sans', sans-serif;-webkit-text-stroke:2.6px #e3eaf2;">Accept</div>
<svg style="position:absolute;left:0;top:0" width="1000" height="500" viewBox="0 0 1000 500"><circle cx="374.2" cy="313.9" r="8.8" fill="#163c67"/><circle cx="463.7" cy="313.9" r="8.8" fill="#163c67"/><circle cx="714.7" cy="313.9" r="8.8" fill="#163c67"/></svg><svg style="position:absolute;left:1838px;top:815.5px;opacity:1.0" width="54" height="54" viewBox="-27 -27 54 54"><circle cx="0" cy="0" r="22.5" fill="none" stroke="#fff" stroke-width="4.5"/><path d="M-7.5 -5.5 Q-7.5 -13.5 0.5 -13.5 Q8.5 -13.5 8.5 -6 Q8.5 -1 3 2 Q1 3.5 1 7" fill="none" stroke="#fff" stroke-width="5"/><rect x="-2.2" y="10" width="5.5" height="5" fill="#fff"/></svg><svg style="position:absolute;left:2677.2px;top:975.0px" width="62" height="60" viewBox="-4 -4 62 60">
<path d="M28 9.4 H1.6 V47.8 H39.8 V32" fill="none" stroke="#0a74cf" stroke-width="3.8"/>
<path d="M15.8 37.2 L15.8 26.6 L40.5 2.2 L50.2 11.8 L26 37.2 Z" fill="none" stroke="#0a74cf" stroke-width="3.3" stroke-linejoin="miter"/>
<path d="M34.5 8.5 L44 18" stroke="#0a74cf" stroke-width="2.8"/>
</svg><svg style="position:absolute;left:3525.2px;top:975.0px" width="62" height="60" viewBox="-4 -4 62 60">
<path d="M28 9.4 H1.6 V47.8 H39.8 V32" fill="none" stroke="#0a74cf" stroke-width="3.8"/>
<path d="M15.8 37.2 L15.8 26.6 L40.5 2.2 L50.2 11.8 L26 37.2 Z" fill="none" stroke="#0a74cf" stroke-width="3.3" stroke-linejoin="miter"/>
<path d="M34.5 8.5 L44 18" stroke="#0a74cf" stroke-width="2.8"/>
</svg><svg style="position:absolute;left:2677.2px;top:1052.2px" width="62" height="60" viewBox="-4 -4 62 60">
<path d="M28 9.4 H1.6 V47.8 H39.8 V32" fill="none" stroke="#0a74cf" stroke-width="3.8"/>
<path d="M15.8 37.2 L15.8 26.6 L40.5 2.2 L50.2 11.8 L26 37.2 Z" fill="none" stroke="#0a74cf" stroke-width="3.3" stroke-linejoin="miter"/>
<path d="M34.5 8.5 L44 18" stroke="#0a74cf" stroke-width="2.8"/>
</svg><svg style="position:absolute;left:3525.2px;top:1052.2px" width="62" height="60" viewBox="-4 -4 62 60">
<path d="M28 9.4 H1.6 V47.8 H39.8 V32" fill="none" stroke="#0a74cf" stroke-width="3.8"/>
<path d="M15.8 37.2 L15.8 26.6 L40.5 2.2 L50.2 11.8 L26 37.2 Z" fill="none" stroke="#0a74cf" stroke-width="3.3" stroke-linejoin="miter"/>
<path d="M34.5 8.5 L44 18" stroke="#0a74cf" stroke-width="2.8"/>
</svg><svg style="position:absolute;left:1838px;top:1371.5px;opacity:0.55" width="54" height="54" viewBox="-27 -27 54 54"><circle cx="0" cy="0" r="22.5" fill="none" stroke="#fff" stroke-width="4.5"/><path d="M-7.5 -5.5 Q-7.5 -13.5 0.5 -13.5 Q8.5 -13.5 8.5 -6 Q8.5 -1 3 2 Q1 3.5 1 7" fill="none" stroke="#fff" stroke-width="5"/><rect x="-2.2" y="10" width="5.5" height="5" fill="#fff"/></svg><svg style="position:absolute;left:1838px;top:1543.8px;opacity:1.0" width="54" height="54" viewBox="-27 -27 54 54"><circle cx="0" cy="0" r="22.5" fill="none" stroke="#fff" stroke-width="4.5"/><path d="M-7.5 -5.5 Q-7.5 -13.5 0.5 -13.5 Q8.5 -13.5 8.5 -6 Q8.5 -1 3 2 Q1 3.5 1 7" fill="none" stroke="#fff" stroke-width="5"/><rect x="-2.2" y="10" width="5.5" height="5" fill="#fff"/></svg><svg style="position:absolute;left:2677.2px;top:1699.2px" width="62" height="60" viewBox="-4 -4 62 60">
<path d="M28 9.4 H1.6 V47.8 H39.8 V32" fill="none" stroke="#0a74cf" stroke-width="3.8"/>
<path d="M15.8 37.2 L15.8 26.6 L40.5 2.2 L50.2 11.8 L26 37.2 Z" fill="none" stroke="#0a74cf" stroke-width="3.3" stroke-linejoin="miter"/>
<path d="M34.5 8.5 L44 18" stroke="#0a74cf" stroke-width="2.8"/>
</svg><svg style="position:absolute;left:3525.2px;top:1699.2px" width="62" height="60" viewBox="-4 -4 62 60">
<path d="M28 9.4 H1.6 V47.8 H39.8 V32" fill="none" stroke="#0a74cf" stroke-width="3.8"/>
<path d="M15.8 37.2 L15.8 26.6 L40.5 2.2 L50.2 11.8 L26 37.2 Z" fill="none" stroke="#0a74cf" stroke-width="3.3" stroke-linejoin="miter"/>
<path d="M34.5 8.5 L44 18" stroke="#0a74cf" stroke-width="2.8"/>
</svg><svg style="position:absolute;left:2677.2px;top:1776.3000000000002px" width="62" height="60" viewBox="-4 -4 62 60">
<path d="M28 9.4 H1.6 V47.8 H39.8 V32" fill="none" stroke="#0a74cf" stroke-width="3.8"/>
<path d="M15.8 37.2 L15.8 26.6 L40.5 2.2 L50.2 11.8 L26 37.2 Z" fill="none" stroke="#0a74cf" stroke-width="3.3" stroke-linejoin="miter"/>
<path d="M34.5 8.5 L44 18" stroke="#0a74cf" stroke-width="2.8"/>
</svg><svg style="position:absolute;left:3525.2px;top:1776.3000000000002px" width="62" height="60" viewBox="-4 -4 62 60">
<path d="M28 9.4 H1.6 V47.8 H39.8 V32" fill="none" stroke="#0a74cf" stroke-width="3.8"/>
<path d="M15.8 37.2 L15.8 26.6 L40.5 2.2 L50.2 11.8 L26 37.2 Z" fill="none" stroke="#0a74cf" stroke-width="3.3" stroke-linejoin="miter"/>
<path d="M34.5 8.5 L44 18" stroke="#0a74cf" stroke-width="2.8"/>
</svg><svg style="position:absolute;left:1838px;top:1860.6px;opacity:0.55" width="54" height="54" viewBox="-27 -27 54 54"><circle cx="0" cy="0" r="22.5" fill="none" stroke="#fff" stroke-width="4.5"/><path d="M-7.5 -5.5 Q-7.5 -13.5 0.5 -13.5 Q8.5 -13.5 8.5 -6 Q8.5 -1 3 2 Q1 3.5 1 7" fill="none" stroke="#fff" stroke-width="5"/><rect x="-2.2" y="10" width="5.5" height="5" fill="#fff"/></svg><svg style="position:absolute;left:1838px;top:2032.5px;opacity:1.0" width="54" height="54" viewBox="-27 -27 54 54"><circle cx="0" cy="0" r="22.5" fill="none" stroke="#fff" stroke-width="4.5"/><path d="M-7.5 -5.5 Q-7.5 -13.5 0.5 -13.5 Q8.5 -13.5 8.5 -6 Q8.5 -1 3 2 Q1 3.5 1 7" fill="none" stroke="#fff" stroke-width="5"/><rect x="-2.2" y="10" width="5.5" height="5" fill="#fff"/></svg><svg style="position:absolute;left:1838px;top:2381px;opacity:0.55" width="54" height="54" viewBox="-27 -27 54 54"><circle cx="0" cy="0" r="22.5" fill="none" stroke="#fff" stroke-width="4.5"/><path d="M-7.5 -5.5 Q-7.5 -13.5 0.5 -13.5 Q8.5 -13.5 8.5 -6 Q8.5 -1 3 2 Q1 3.5 1 7" fill="none" stroke="#fff" stroke-width="5"/><rect x="-2.2" y="10" width="5.5" height="5" fill="#fff"/></svg><svg style="position:absolute;left:1838px;top:2556.8px;opacity:0.55" width="54" height="54" viewBox="-27 -27 54 54"><circle cx="0" cy="0" r="22.5" fill="none" stroke="#fff" stroke-width="4.5"/><path d="M-7.5 -5.5 Q-7.5 -13.5 0.5 -13.5 Q8.5 -13.5 8.5 -6 Q8.5 -1 3 2 Q1 3.5 1 7" fill="none" stroke="#fff" stroke-width="5"/><rect x="-2.2" y="10" width="5.5" height="5" fill="#fff"/></svg>
</body></html>
